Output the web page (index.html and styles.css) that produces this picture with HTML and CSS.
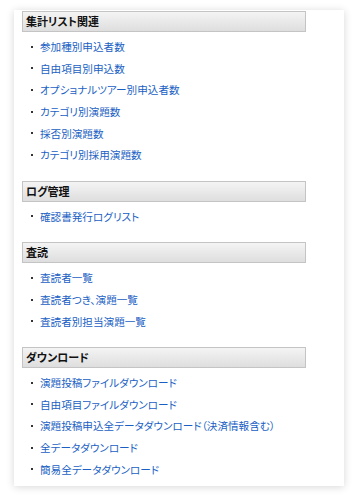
FILE: index.html
```html
<!DOCTYPE html>
<html lang="ja">
<head>
    <meta charset="UTF-8">
    <meta name="viewport" content="width=device-width, initial-scale=1.0">
    <title>メニュー</title>
    <link rel="stylesheet" href="styles.css">
</head>
<body>
    <div class="container">
        <div class="section">
            <h2>集計リスト関連</h2>
            <ul>
                <li><a href="#">参加種別申込者数</a></li>
                <li><a href="#">自由項目別申込数</a></li>
                <li><a href="#">オプショナルツアー別申込者数</a></li>
                <li><a href="#">カテゴリ別演題数</a></li>
                <li><a href="#">採否別演題数</a></li>
                <li><a href="#">カテゴリ別採用演題数</a></li>
            </ul>
        </div>
        <div class="section">
            <h2>ログ管理</h2>
            <ul>
                <li><a href="#">確認書発行ログリスト</a></li>
            </ul>
        </div>
        <div class="section">
            <h2>査読</h2>
            <ul>
                <li><a href="#">査読者一覧</a></li>
                <li><a href="#">査読者つき、演題一覧</a></li>
                <li><a href="#">査読者別担当演題一覧</a></li>
            </ul>
        </div>
        <div class="section">
            <h2>ダウンロード</h2>
            <ul>
                <li><a href="#">演題投稿ファイルダウンロード</a></li>
                <li><a href="#">自由項目ファイルダウンロード</a></li>
                <li><a href="#">演題投稿申込全データダウンロード（決済情報含む）</a></li>
                <li><a href="#">全データダウンロード</a></li>
                <li><a href="#">簡易全データダウンロード</a></li>
            </ul>
        </div>
    </div>
</body>
</html>
```

FILE: styles.css
```css
body {
    margin: 0;
    padding: 10px 12px 11px 14px;
    background: #fff;
    font-family: "Noto Sans CJK JP", "Noto Sans", sans-serif;
    font-size: 11px;
    font-feature-settings: "palt";
}
.container {
    width: 330px;
    box-sizing: border-box;
    padding: 1px 8px 6px;
    background: #fff;
    box-shadow: 0 1px 8px rgba(0,0,0,0.16);
}
.section {
    width: 284px;
    margin-bottom: 15px;
}
.section:last-child {
    margin-bottom: 0;
}
h2 {
    margin: 0;
    height: 21px;
    box-sizing: border-box;
    padding: 0 3px;
    border: 1px solid #c4c4c4;
    background: linear-gradient(#f4f4f4, #dedede);
    font-size: 11px;
    font-weight: bold;
    line-height: 19px;
    color: #111;
}
ul {
    list-style: none;
    margin: 4px 0 0;
    padding: 0;
}
li {
    display: flex;
    align-items: center;
    height: 21.6px;
    font-size: 10.6px;
}
li::before {
    content: "";
    width: 2px;
    height: 2px;
    margin: 0 7px 0 9px;
    background: #333;
}
a {
    color: #1a5fc4;
    text-decoration: none;
}
```
